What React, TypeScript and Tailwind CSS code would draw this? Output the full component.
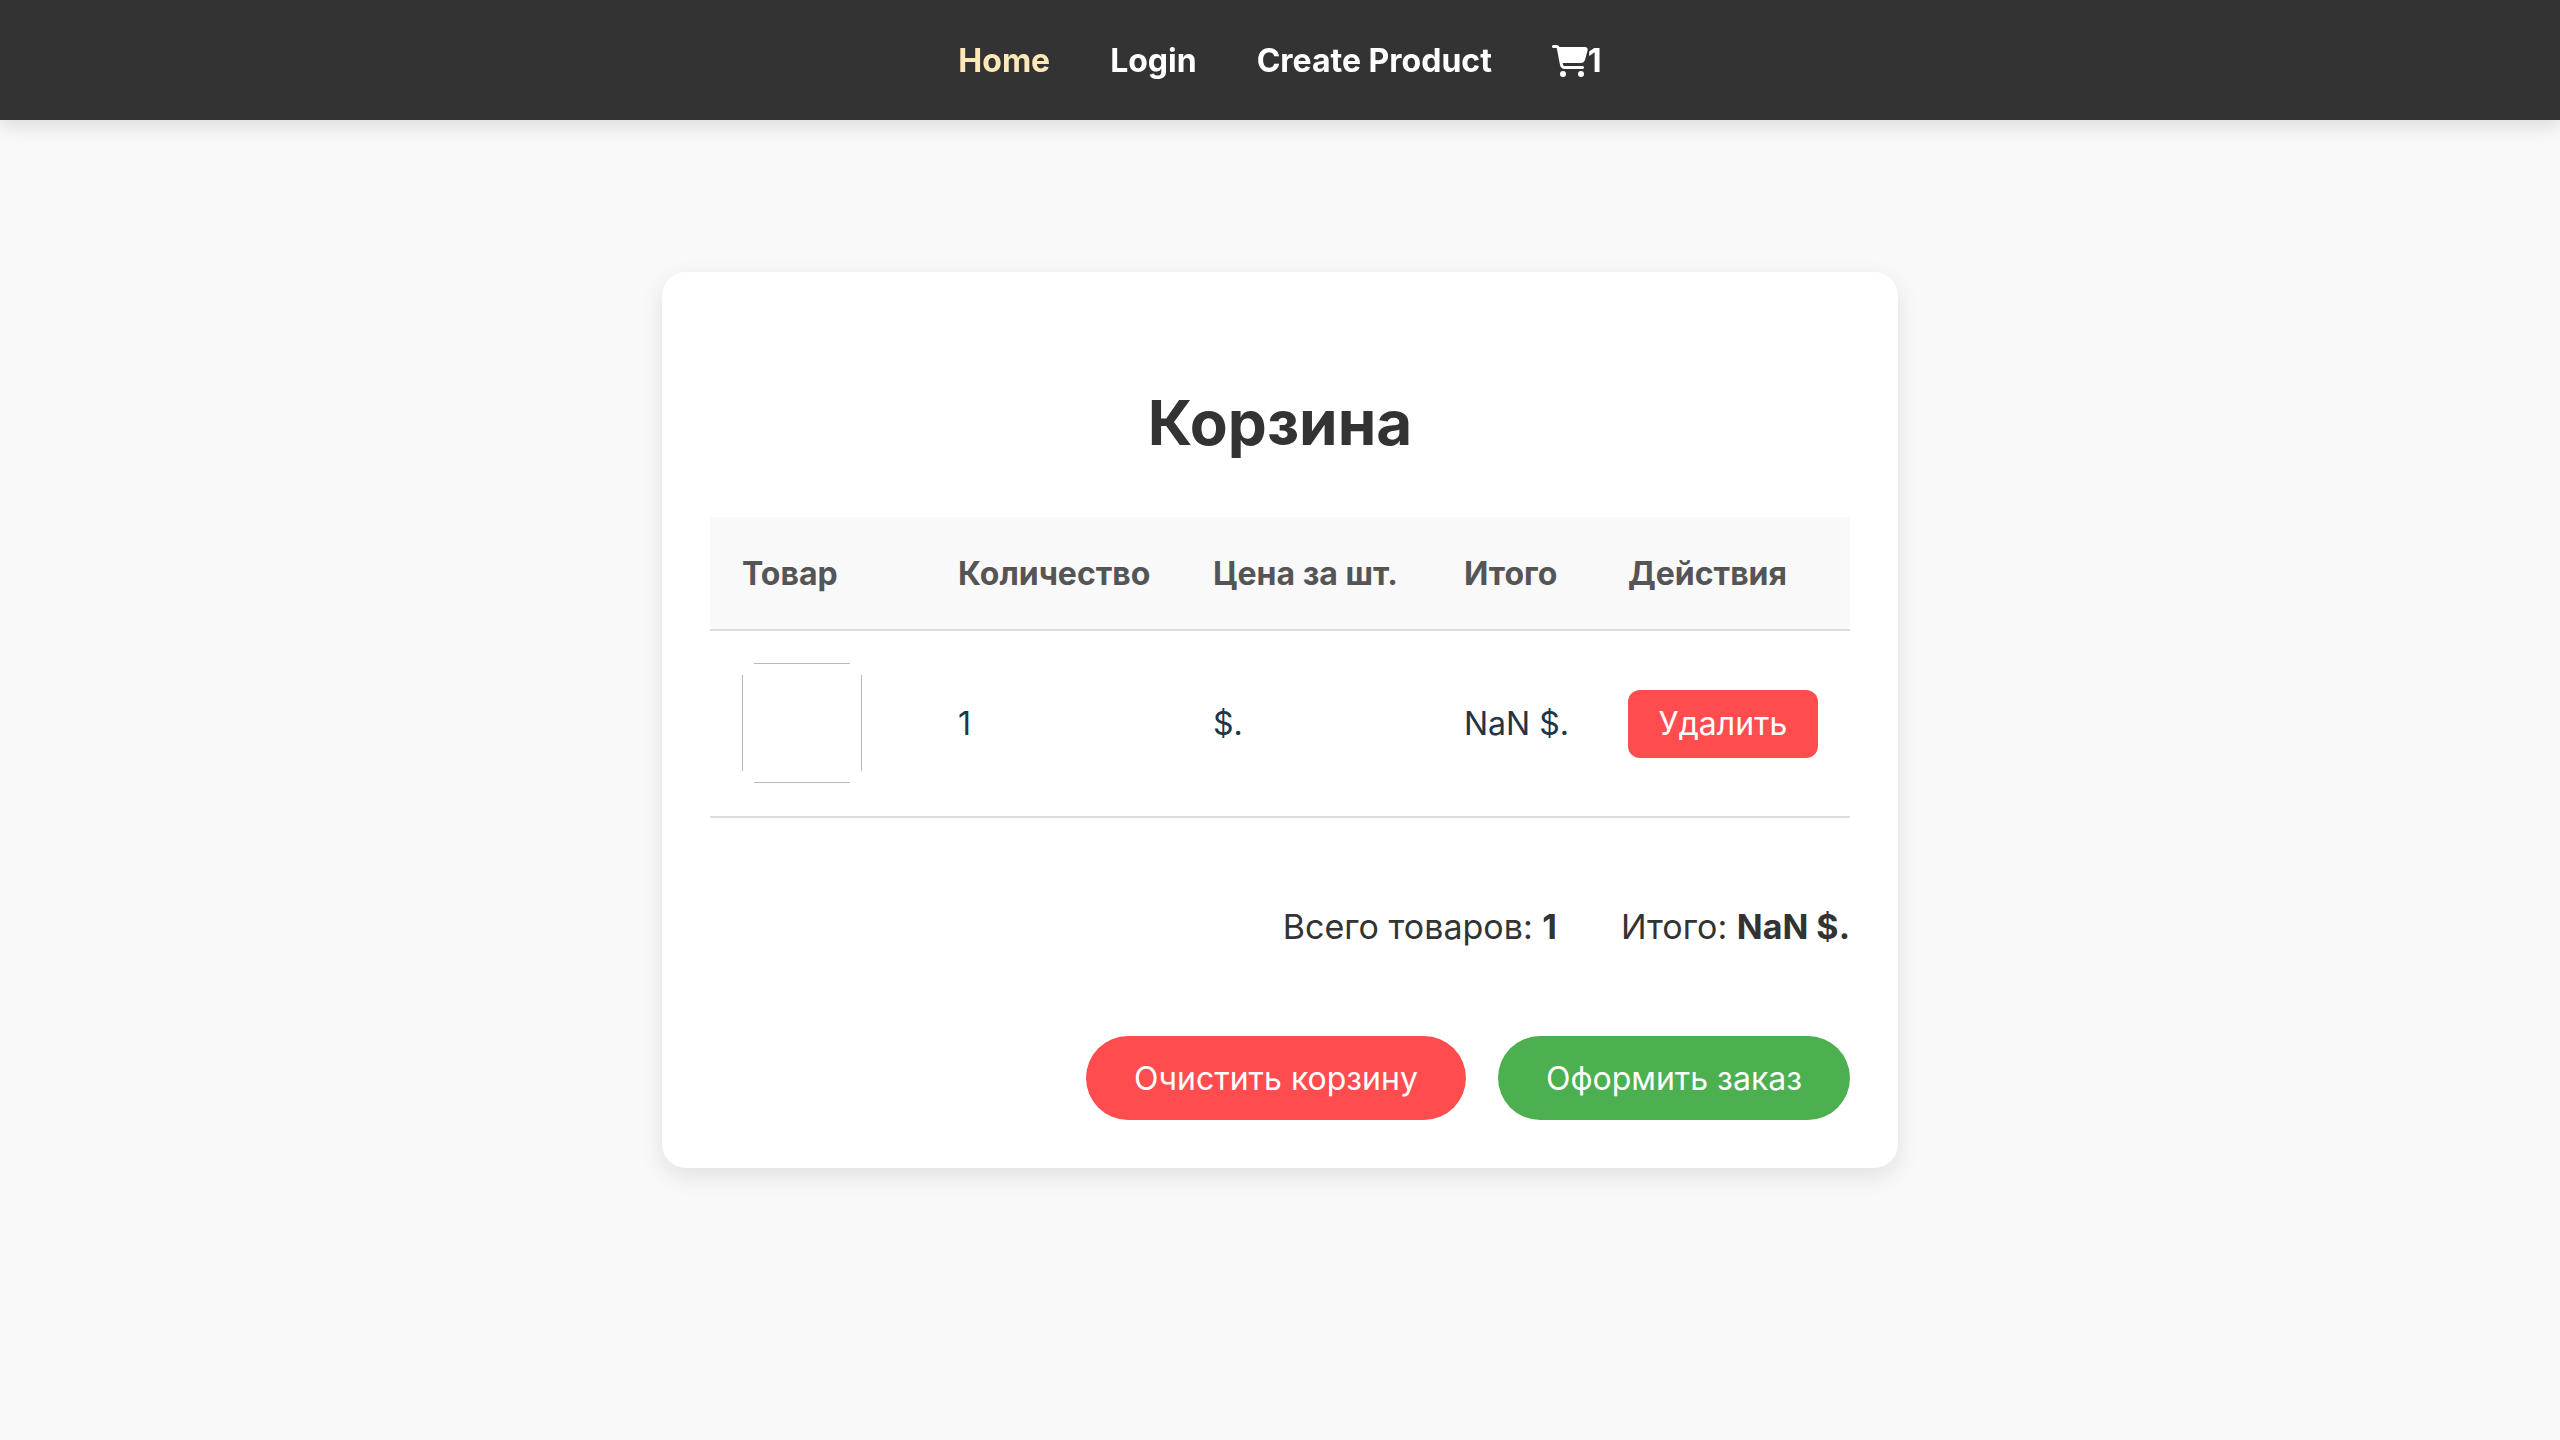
import React from "react";
import { FaCartShopping } from "react-icons/fa6";

const columns = [
  { label: "Товар", width: "w-[216px]" },
  { label: "Количество", width: "w-[255px]" },
  { label: "Цена за шт.", width: "w-[251px]" },
  { label: "Итого", width: "w-[164px]" },
  { label: "Действия", width: "w-[254px]" },
];

function NavBar() {
  return (
    <nav className="fixed inset-x-0 top-0 z-10 flex h-[120px] items-center justify-center gap-[60px] bg-[#333] pt-0.5 text-[32px] leading-[48px] font-bold text-white shadow-[0_8px_16px_rgba(0,0,0,0.1)]">
      <a href="#home" className="text-[#ffe8b8]">Home</a>
      <a href="#login">Login</a>
      <a href="#create">Create Product</a>
      <a href="#cart" aria-label="Cart" className="flex items-center">
        <FaCartShopping className="h-8 w-9" />
        <span>1</span>
      </a>
    </nav>
  );
}

function CartTable() {
  return (
    <table className="w-full table-fixed border-separate border-spacing-0 text-left text-[32px] leading-[48px]">
      <thead className="bg-[#f9f9f9] text-[#555]">
        <tr>
          {columns.map((c) => (
            <th key={c.label} scope="col" className={`${c.width} h-[114px] border-b-2 border-[#ddd] px-8 pt-0.5 font-bold whitespace-nowrap`}>
              {c.label}
            </th>
          ))}
        </tr>
      </thead>
      <tbody className="text-[#213547]">
        <tr className="h-[187px]">
          <td className="border-b-2 border-[#ddd] px-8 align-top pt-8">
            <div className="grid size-[120px]">
              <div className="col-start-1 row-start-1 mx-3 border-y border-[#b8b8b8]" />
              <div className="col-start-1 row-start-1 my-3 border-x border-[#b8b8b8]" />
            </div>
          </td>
          <td className="border-b-2 border-[#ddd] px-8">1</td>
          <td className="border-b-2 border-[#ddd] px-8">$.</td>
          <td className="border-b-2 border-[#ddd] px-8 whitespace-nowrap">NaN $.</td>
          <td className="border-b-2 border-[#ddd] px-8">
            <button type="button" className="block h-[68px] w-full rounded-xl bg-[#ff4d4f] text-center text-white">Удалить</button>
          </td>
        </tr>
      </tbody>
    </table>
  );
}

export default function App() {
  return (
    <div className="min-h-screen bg-[#f9f9f9] font-['Inter','Liberation_Sans',sans-serif]">
      <NavBar />
      <main className="flex min-h-screen items-center justify-center">
        <section className="w-full max-w-[1236px] rounded-3xl bg-white px-12 pt-[104px] pb-12 shadow-[0_8px_24px_rgba(0,0,0,0.1)]">
          <h1 className="mb-12 text-center text-[62px] leading-[93px] font-bold text-[#333]">Корзина</h1>
          <CartTable />
          <div className="mt-[83px] flex justify-end gap-16 text-[34px] leading-[52px] text-[#333]">
            <p>Всего товаров: <strong className="font-bold">1</strong></p>
            <p>Итого: <strong className="font-bold">NaN $.</strong></p>
          </div>
          <div className="mt-[83px] flex justify-end gap-8 text-[32px] leading-9 text-white">
            <button type="button" className="h-[84px] rounded-full bg-[#ff4d4f] px-12 pt-0.5">Очистить корзину</button>
            <button type="button" className="h-[84px] rounded-full bg-[#4caf50] px-12 pt-0.5">Оформить заказ</button>
          </div>
        </section>
      </main>
    </div>
  );
}
